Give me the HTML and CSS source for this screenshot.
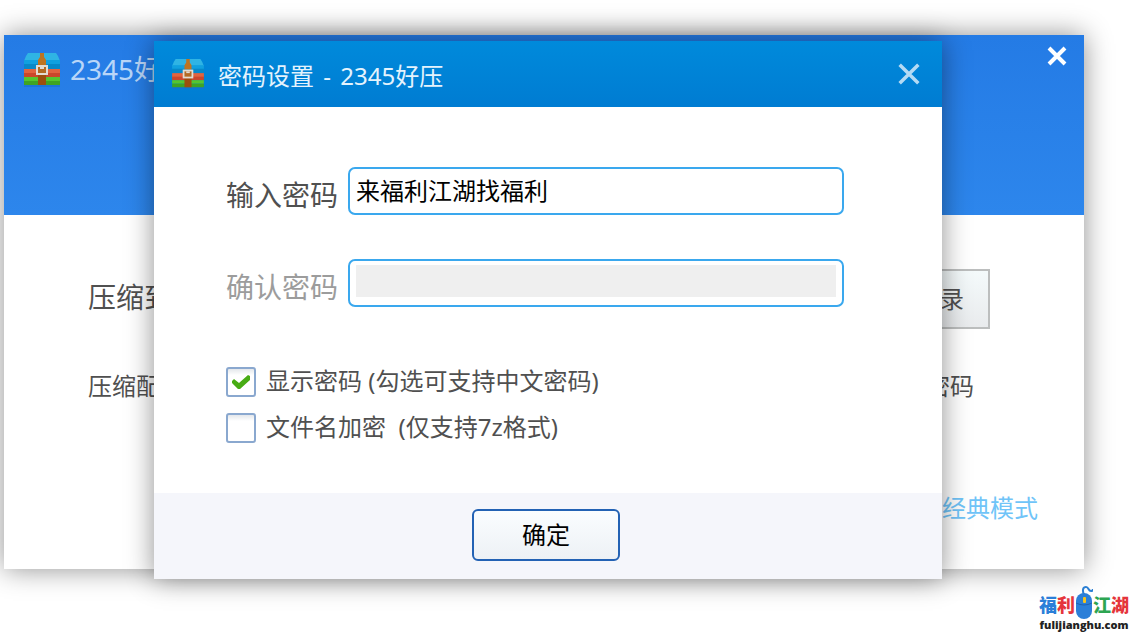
FILE: index.html
```html
<!DOCTYPE html>
<html lang="zh-CN">
<head>
  <meta charset="UTF-8">
  <title>密码设置 - 2345好压</title>
  <link rel="stylesheet" href="styles.css">
</head>
<body>

  <!-- archive chest, used in both title bars -->
  <svg class="defs" width="0" height="0">
    <symbol id="chest" viewBox="0 0 36 34">
      <path fill="#176fd0" opacity=".6" d="M0 30h36v4H0z"/>
      <path fill="#2fb4e4" d="M4 0h28l2 3 2 5H0l2-5z"/>
      <path fill="#10a0df" d="M0 7h36v5H0z"/>
      <path fill="#0788c8" d="M0 11h36v5H0z"/>
      <path fill="#e2633f" d="M0 16h36v5H0z"/>
      <path fill="#cb472b" d="M0 20h36v4H0z"/>
      <path fill="#56c62f" d="M0 24h36v4H0z"/>
      <path fill="#3fa423" d="M0 28h36v4H0z"/>
      <path fill="#bd7420" d="M16 0h4v4l2 3v5h-8V7l2-3z"/>
      <path fill="#9c4f0c" d="M14 22h8v10h-8z"/>
      <path fill="#e2dcd2" d="M12 12h12v10H12z"/>
      <path fill="#b36a22" d="M14 14h8v6h-8z"/>
      <path fill="#e2dcd2" d="M16 14h4v2h-4z"/>
    </symbol>
    <symbol id="cross" viewBox="0 0 24 24">
      <path d="M4 4l16 16M20 4L4 20" fill="none" stroke="currentColor"/>
    </symbol>
  </svg>

  <div class="window">
    <div class="window-head">
      <svg class="window-icon"><use href="#chest"/></svg>
      <span class="window-title">2345好压</span>
      <button class="close" type="button" aria-label="关闭"><svg><use href="#cross"/></svg></button>
    </div>

    <div class="window-body">
      <div class="row">
        <span class="row-label">压缩到</span>
        <button class="browse" type="button">更改目录</button>
      </div>
      <div class="row config">
        <span>压缩配置</span>
        <span>设置密码</span>
      </div>
      <a class="classic" href="#">经典模式</a>
    </div>

    <form class="dialog">
      <div class="dialog-head">
        <svg class="dialog-icon"><use href="#chest"/></svg>
        <span class="dialog-title">密码设置<span class="dash"> - </span>2345好压</span>
        <button class="close" type="button" aria-label="关闭"><svg><use href="#cross"/></svg></button>
      </div>

      <div class="dialog-body">
        <div class="field">
          <label for="pwd">输入密码</label>
          <input type="text" id="pwd" value="来福利江湖找福利">
        </div>
        <div class="field disabled">
          <label for="pwd2">确认密码</label>
          <input type="text" id="pwd2" disabled>
        </div>

        <label class="check"><input type="checkbox" checked><span>显示密码 (勾选可支持中文密码)</span></label>
        <label class="check"><input type="checkbox"><span>文件名加密&nbsp; (仅支持7z格式)</span></label>
      </div>

      <div class="dialog-foot">
        <button class="ok" type="button">确定</button>
      </div>
    </form>
  </div>

  <div class="logo">
    <div class="logo-top">
      <span class="blue">福</span><span class="red">利</span>
      <svg class="mouse" viewBox="0 0 18 34">
        <path d="M9 10C7 5 8 2 11 2s2 4 5 4q2 0 2-2" fill="none" stroke="#2b7fd3" stroke-width="2"/>
        <rect x="1" y="8" width="16" height="26" rx="8" fill="#2b7fd8"/>
        <path d="M1 18q8 4 16 0" fill="none" stroke="#1c62b4"/>
        <rect x="8" y="12" width="3" height="6" rx="1" fill="#f6c51d"/>
      </svg>
      <span class="green">江</span><span class="red">湖</span>
    </div>
    <div class="logo-url">fulijianghu.com</div>
  </div>

</body>
</html>
```

FILE: styles.css
```css
* {
  box-sizing: border-box;
}

body {
  position: relative;
  min-height: 100vh;
  margin: 0;
  padding: 35px 55px 70px 4px;
  background: #fff;
  color: #505050;
  font-family: "Noto Sans", "Noto Sans CJK SC", sans-serif;
  font-size: 24px;
  line-height: 32px;
}

button,
input {
  margin: 0;
  font: inherit;
}

.defs {
  position: absolute;
}

.window {
  position: relative;
  background: #fff;
  box-shadow: 0 0 26px rgba(0, 0, 0, 0.44);
}

.window-head {
  display: flex;
  align-items: flex-start;
  height: 180px;
  padding: 18px 15px 0 20px;
  background: linear-gradient(#247be5, #2d86ec);
  color: #b9d6f8;
}

.window-icon {
  width: 36px;
  height: 34px;
}

.window-title {
  margin-left: 10px;
  font-size: 28px;
}

.close {
  margin-left: auto;
  padding: 0;
  border: none;
  background: none;
  color: #fff;
  stroke-width: 4px;
}

.close svg {
  display: block;
  width: 24px;
  height: 24px;
}

.window-head .close {
  margin-top: -9px;
}

.window-body {
  height: 354px;
  padding: 54px 94px 0 84px;
}

.row {
  display: flex;
  justify-content: space-between;
}

.row-label {
  margin-top: 12px;
  font-size: 28px;
}

.browse {
  width: 148px;
  height: 60px;
  border: 2px solid #bcbebe;
  background: linear-gradient(#f4fafb, #e9ebed);
  color: #505050;
}

.config {
  padding: 41px 16px 0 0;
}

.classic {
  display: block;
  margin: 90px -48px 0 0;
  color: #70c4f8;
  text-align: right;
  text-decoration: none;
}

/* password dialog, on top of the main window */
.dialog {
  position: absolute;
  top: 6px;
  left: 150px;
  right: 142px;
  background: #fff;
  box-shadow: 0 0 26px rgba(0, 0, 0, 0.44);
}

.dialog-head {
  display: flex;
  align-items: center;
  height: 66px;
  padding: 0 21px 0 18px;
  background: linear-gradient(#008adb, #007cd2);
  color: #e4f3fd;
}

.dialog-icon {
  width: 32px;
  height: 30px;
}

.dialog-title {
  margin-left: 14px;
  padding-top: 4px;
}

.dash {
  padding: 0 3px;
}

.dialog-head .close {
  color: #b4daf4;
  stroke-width: 3px;
}

.dialog-head .close svg {
  width: 28px;
  height: 28px;
  margin-right: -2px;
}

.dialog-body {
  height: 386px;
  padding: 60px 98px 0 72px;
}

.field {
  display: flex;
  height: 48px;
  margin-bottom: 44px;
}

.field label {
  flex: none;
  width: 122px;
  padding-top: 12px;
  font-size: 28px;
}

.field input {
  flex: 1;
  min-width: 0;
  padding: 6px;
  border: 2px solid #3aa8ee;
  border-radius: 7px;
  background: #fff;
  color: #000;
}

.field.disabled {
  margin-bottom: 52px;
  color: #9c9c9c;
}

.field.disabled input {
  padding: 4px 6px 8px;
  background: #efefef content-box;
}

.check {
  display: flex;
  align-items: center;
  height: 46px;
}

.check span {
  padding-bottom: 2px;
}

.check input {
  appearance: none;
  width: 30px;
  height: 30px;
  margin: 0 10px 0 0;
  padding: 4px;
  border: 2px solid #8aa8cf;
  border-radius: 3px;
  background: linear-gradient(#e4e7eb, #fff 6px);
}

.check input:checked::before {
  content: "";
  display: block;
  width: 18px;
  height: 18px;
  background: #48ac14;
  clip-path: polygon(0 8px, 2px 6px, 7px 10px, 16px 2px, 18px 3px, 18px 7px, 8px 16px, 6px 16px, 0 10px);
}

.dialog-foot {
  height: 86px;
  padding-top: 16px;
  background: #f5f6fb;
  text-align: center;
}

.ok {
  width: 148px;
  height: 52px;
  margin-right: 4px;
  border: 2px solid #2362b4;
  border-radius: 6px;
  background: linear-gradient(#fafdff, #edf1f5);
  color: #000;
}

/* site mark in the corner */
.logo {
  position: absolute;
  right: 10px;
  bottom: 8px;
  width: 90px;
  color: #222;
}

.logo-top {
  display: flex;
  align-items: flex-end;
  font-size: 18px;
  font-weight: 900;
  line-height: 28px;
}

.mouse {
  width: 18px;
  height: 34px;
}

.logo-url {
  font-family: "Open Sans", sans-serif;
  font-size: 11px;
  font-weight: 800;
  line-height: 12px;
  text-align: center;
}

.blue {
  color: #2b7fd8;
}

.red {
  color: #e5353b;
}

.green {
  color: #2da552;
}
```
